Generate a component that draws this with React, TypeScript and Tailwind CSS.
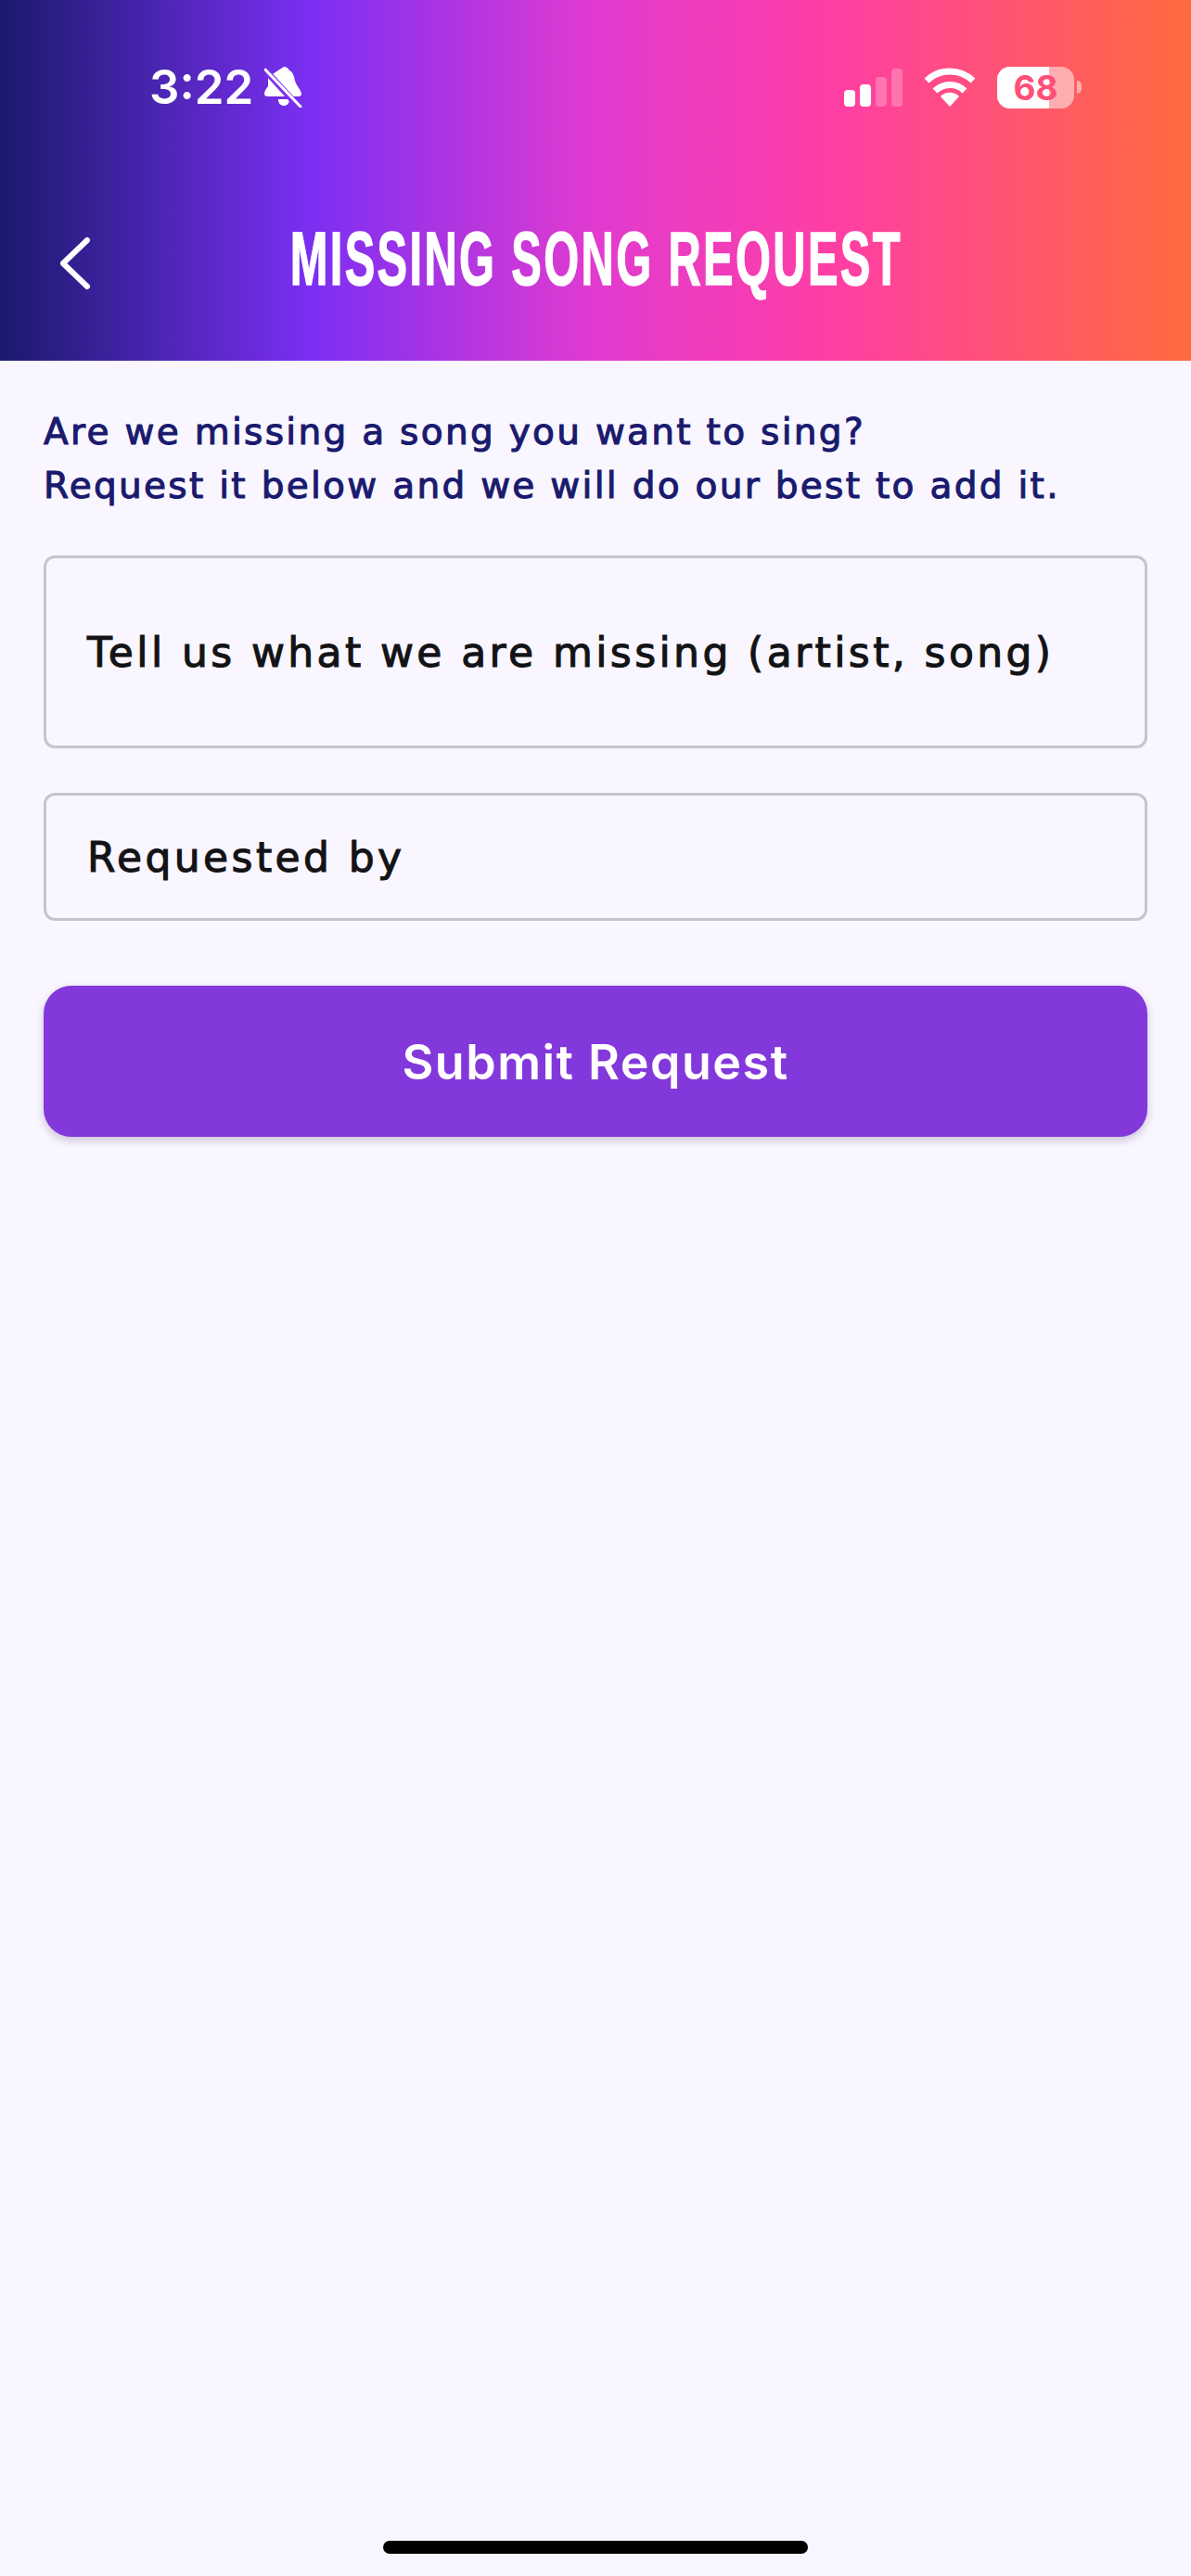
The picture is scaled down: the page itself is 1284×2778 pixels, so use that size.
import React from 'react';

const uiFont = { fontFamily: 'Inter, "Liberation Sans", sans-serif' };
const wideFont = { fontFamily: '"DejaVu Sans", sans-serif' };

function BellSlash() {
  return (
    <svg width="41" height="44" viewBox="0 0 41 44" fill="none">
      <path d="M21 0c3 0 5 2 6 4 4 2 5 6 6 11 1 5 6 9 7 14 0 2-1 3-3 3H4c-3 0-4-1-4-3 0-3 2-5 4-8V11z" fill="white" />
      <path d="M15 35h12c0 5-3 7-6 7s-6-2-6-7z" fill="white" />
      <path d="M3 6l33 36" stroke="#7f2ef0" strokeWidth="7" />
      <path d="M1 3l38 40" stroke="white" strokeWidth="3" strokeLinecap="round" />
    </svg>
  );
}

function SignalBars() {
  return (
    <div className="flex items-end gap-[5px] h-[41px]">
      <div className="w-[12px] h-[18px] rounded-[4px] bg-white" />
      <div className="w-[12px] h-[24px] rounded-[4px] bg-white" />
      <div className="w-[12px] h-[32px] rounded-[4px] bg-white/25" />
      <div className="w-[12px] h-[41px] rounded-[4px] bg-white/25" />
    </div>
  );
}

function WifiIcon() {
  return (
    <svg width="56" height="42" viewBox="0 0 56 42" fill="none">
      <path d="M3 14A36 36 0 0 1 53 14" stroke="white" strokeWidth="7" />
      <path d="M12 25A23 23 0 0 1 44 25" stroke="white" strokeWidth="7" />
      <path d="M28 42L18 31A14 14 0 0 1 38 31Z" fill="white" />
    </svg>
  );
}

function Battery() {
  return (
    <div className="flex items-center gap-[3px]">
      <div className="relative w-[83px] h-[45px] rounded-[14px] overflow-hidden bg-white/50 flex items-center justify-center">
        <div className="absolute left-0 top-0 bottom-0 w-[56px] bg-white" />
        <span className="relative text-[37px] font-bold leading-none text-[#ff4f78]" style={uiFont}>68</span>
      </div>
      <div className="w-[5px] h-[14px] rounded-r-full bg-white/50" />
    </div>
  );
}

function Field({ label, tall }: { label: string; tall?: boolean }) {
  return (
    <div className={`flex items-center border-[3px] border-[#c6c4cc] rounded-[12px] pl-[44px] pt-[2px] ${tall ? 'h-[208px]' : 'h-[138px]'}`}>
      <span className="text-[44px] leading-none tracking-[3.4px] text-[#131316] [-webkit-text-stroke:1.1px_#131316] whitespace-nowrap" style={wideFont}>{label}</span>
    </div>
  );
}

export default function App() {
  return (
    <div className="min-h-[2778px] flex flex-col bg-[#f9f6ff]">
      <header className="h-[389px] bg-[linear-gradient(90deg,#1a1a6e_0%,#7b2ff2_26%,#e23bd0_50%,#ff3ea5_70%,#ff6b3d_100%)] text-white">
        <div className="flex items-center justify-between pt-[71px] pl-[161px] pr-[118px]">
          <div className="flex items-center gap-[12px]">
            <span className="text-[51px] font-semibold leading-[46px]" style={uiFont}>3:22</span>
            <BellSlash />
          </div>
          <div className="flex items-center gap-[23px]">
            <SignalBars />
            <WifiIcon />
            <Battery />
          </div>
        </div>
        <div className="grid grid-cols-[1fr_auto_1fr] items-center mt-[126px] pl-[62px]">
          <svg className="mt-[9px]" width="38" height="58" viewBox="0 0 38 58" fill="none">
            <path d="M32 4L6 29l26 25" stroke="white" strokeWidth="6" strokeLinecap="round" strokeLinejoin="round" />
          </svg>
          <h1 className="text-[82px] font-bold leading-[72px] tracking-[4px] whitespace-nowrap scale-x-[0.595] [-webkit-text-stroke:1.5px_white] -translate-x-[30px]" style={{ fontFamily: '"Liberation Sans", sans-serif' }}>
            MISSING SONG REQUEST
          </h1>
          <div />
        </div>
      </header>

      <main className="flex-1 px-[47px] pt-[48px]">
        <p className="text-[39px] leading-[58px] tracking-[2.3px] text-[#1a1a6e] [-webkit-text-stroke:1.1px_#1a1a6e] whitespace-nowrap" style={wideFont}>
          Are we missing a song you want to sing?
          <br />
          Request it below and we will do our best to add it.
        </p>
        <div className="flex flex-col gap-[48px] mt-[46px]">
          <Field label="Tell us what we are missing (artist, song)" tall />
          <Field label="Requested by" />
        </div>
        <button className="w-full h-[163px] mt-[70px] pt-[2px] rounded-[30px] bg-[#8338dc] text-white text-[52px] tracking-[1.5px] font-semibold shadow-[0_4px_10px_rgba(40,20,80,0.22)]" style={uiFont}>
          Submit Request
        </button>
      </main>

      <div className="flex justify-center pb-[24px]">
        <div className="w-[458px] h-[14px] rounded-full bg-black" />
      </div>
    </div>
  );
}
